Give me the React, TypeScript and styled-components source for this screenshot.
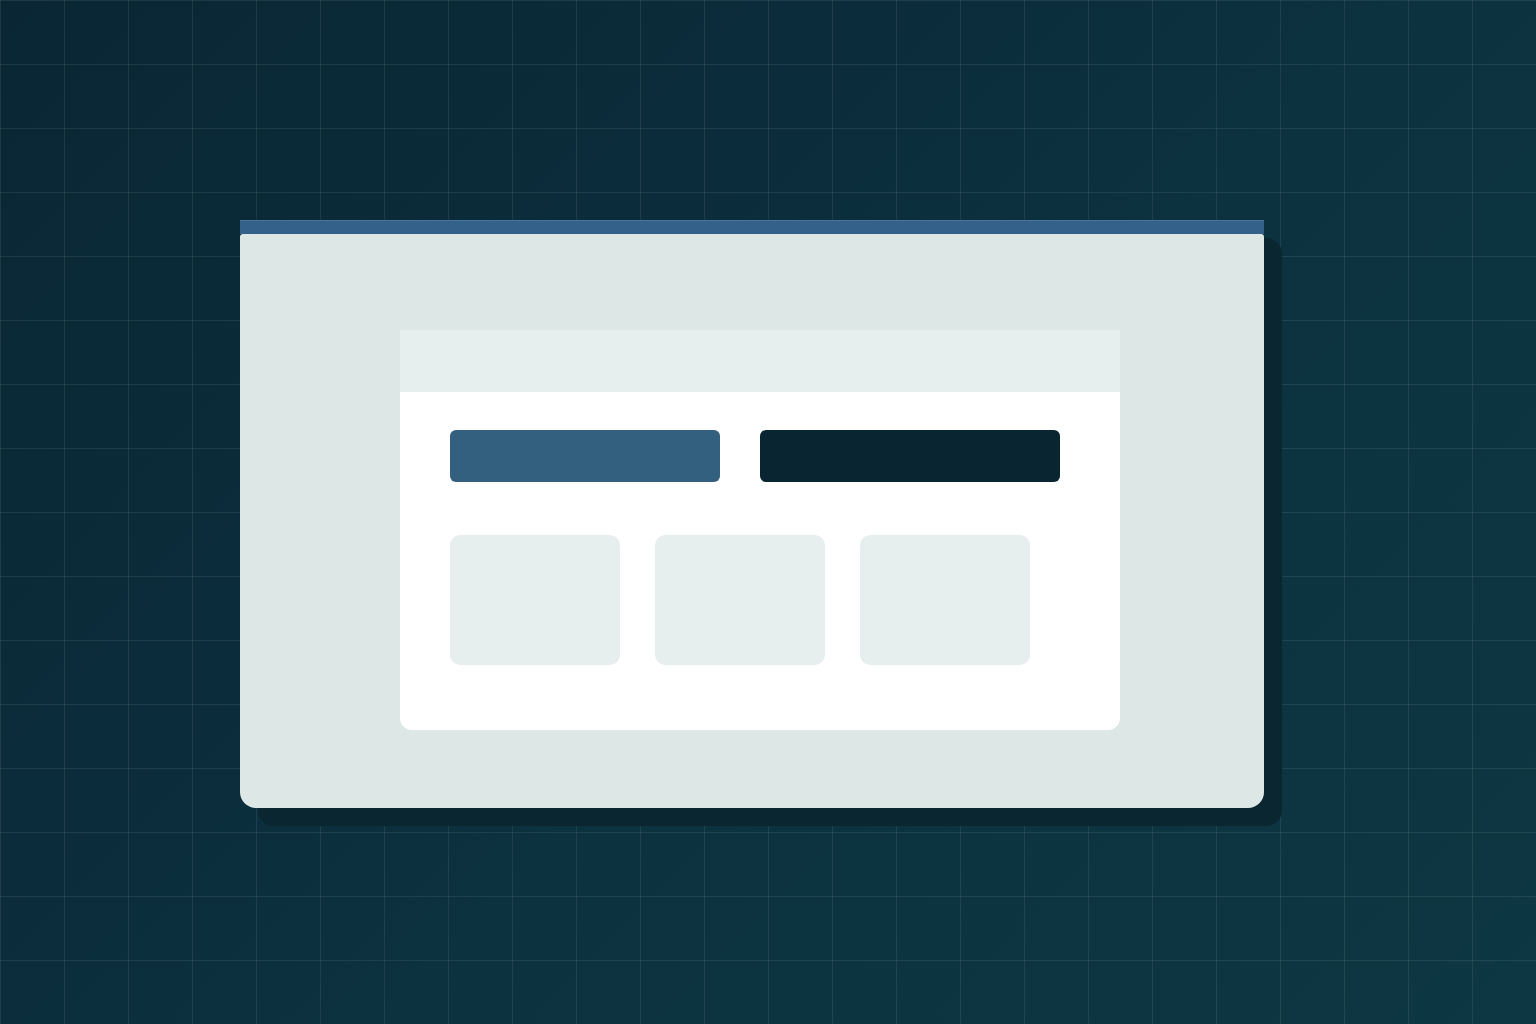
import React from 'react'
import styled, { createGlobalStyle } from 'styled-components'

const GlobalStyle = createGlobalStyle`
  html, body {
    margin: 0;
    padding: 0;
    font-family: 'Liberation Sans', Arial, sans-serif;
  }
`

const Page = styled.div`
  width: 1536px;
  height: 1024px;
  box-sizing: border-box;
  padding: 220px 0 0 240px;
  background-color: #0a2734;
  background-image: linear-gradient(rgba(255, 255, 255, 0.08) 1px, transparent 1px),
    linear-gradient(90deg, rgba(255, 255, 255, 0.08) 1px, transparent 1px),
    linear-gradient(135deg, #0a2634 0%, #0c3240 60%, #0d3742 100%);
  background-size: 64px 64px, 64px 64px, 100% 100%;
  background-position: 0 0, 0 0, 0 0;
  overflow: hidden;
`

// window keeps round corners all round so its shadow does too; the bar sits square on top
const Window = styled.div`
  width: 1024px;
  display: flex;
  flex-direction: column;
  border-radius: 16px;
  box-shadow: 18px 18px 0 #0a2630;
`

const TitleBar = styled.div`
  height: 14px;
  background: #33618a;
  border-top: 1px solid #4a7598;
  box-sizing: border-box;
`

const Body = styled.div`
  height: 574px;
  box-sizing: border-box;
  padding: 96px 144px 0 160px;
  background: #dde7e6;
  border-radius: 3px 3px 16px 16px;
`

const Panel = styled.div`
  width: 720px;
  height: 400px;
  background: #ffffff;
  border-radius: 0 0 12px 12px;
  display: flex;
  flex-direction: column;
  overflow: hidden;
`

const PanelHeader = styled.div`
  height: 62px;
  background: #e6efee;
`

const PanelContent = styled.div`
  padding: 38px 50px 0;
  display: flex;
  flex-direction: column;
  gap: 53px;
`

const ButtonRow = styled.div`
  display: flex;
  gap: 40px;
`

const Button = styled.div<{ $w: number; $bg: string }>`
  width: ${(p) => p.$w}px;
  height: 52px;
  border-radius: 6px;
  background: ${(p) => p.$bg};
`

const CardRow = styled.div`
  display: flex;
  gap: 35px;
`

const Card = styled.div`
  width: 170px;
  height: 130px;
  border-radius: 10px;
  background: #e6efee;
`

export default function App() {
  return (
    <>
      <GlobalStyle />
      <Page>
        <Window>
          <TitleBar />
          <Body>
            <Panel>
              <PanelHeader />
              <PanelContent>
                <ButtonRow>
                  <Button $w={270} $bg="#33607f" />
                  <Button $w={300} $bg="#0a2532" />
                </ButtonRow>
                <CardRow>
                  <Card />
                  <Card />
                  <Card />
                </CardRow>
              </PanelContent>
            </Panel>
          </Body>
        </Window>
      </Page>
    </>
  )
}
